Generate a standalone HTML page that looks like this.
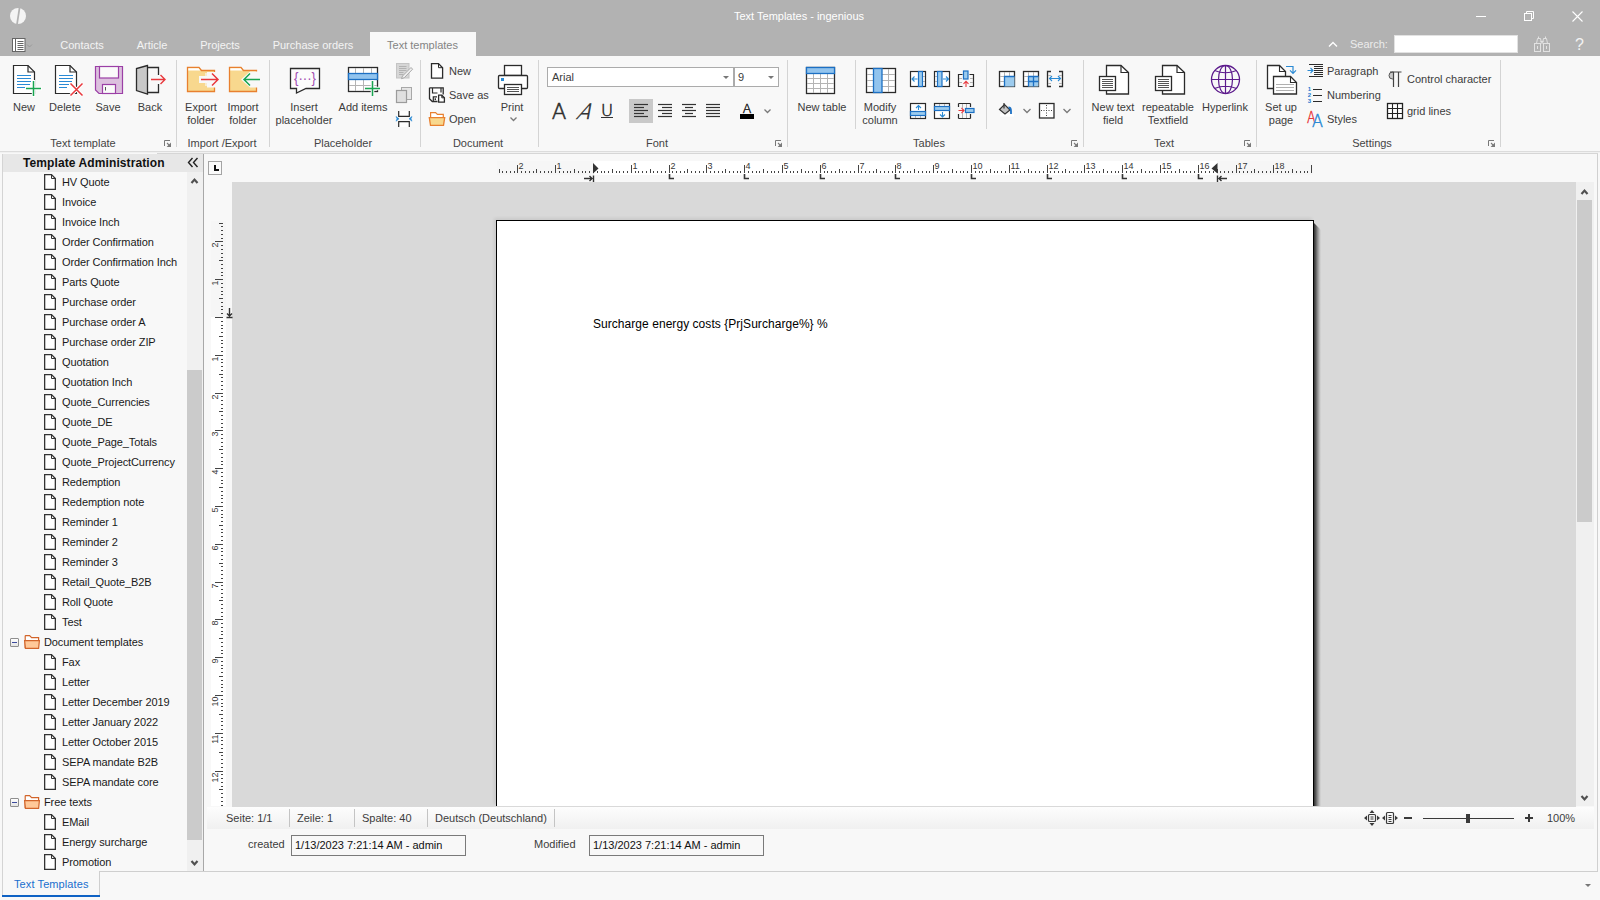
<!DOCTYPE html><html><head><meta charset="utf-8"><title>Text Templates - ingenious</title><style>
*{box-sizing:border-box;margin:0;padding:0}
html,body{width:1600px;height:900px;overflow:hidden;background:#f8f8f8}
body{font-family:"Liberation Sans",sans-serif;font-size:11px;color:#3c3c3c;position:relative;line-height:13px}
.a{position:absolute}
.t{position:absolute;white-space:nowrap;line-height:13px;height:13px}
.c{text-align:center;transform:translateX(-50%)}
.sep{position:absolute;width:1px;background:#d2d2d2}
svg{position:absolute;overflow:visible}
.gl{position:absolute;white-space:nowrap;line-height:13px;height:13px;text-align:center;transform:translateX(-50%);top:137px;color:#444}
</style></head><body><div class="a" style="left:0px;top:0px;width:1600px;height:56px;background:#b2b2b2;"></div><div class="t c" style="left:799px;top:10px;color:#fff;font-size:11px">Text Templates - ingenious</div><div class="a" style="left:370px;top:32px;width:106px;height:24px;background:#f8f8f8;"></div><div class="t c" style="left:82px;top:39px;color:#f4f4f4">Contacts</div><div class="t c" style="left:152px;top:39px;color:#f4f4f4">Article</div><div class="t c" style="left:220px;top:39px;color:#f4f4f4">Projects</div><div class="t c" style="left:313px;top:39px;color:#f4f4f4">Purchase orders</div><div class="t c" style="left:422.5px;top:39px;color:#848484">Text templates</div><div class="t " style="left:1350px;top:38px;color:#ececec">Search:</div><div class="a" style="left:1394px;top:35px;width:124px;height:18px;background:#fff;border:1px solid #e2e2e2"></div><div class="a" style="left:0px;top:56px;width:1600px;height:96px;background:#f8f8f8;"></div><div class="a" style="left:0px;top:151px;width:1600px;height:1px;background:#dcdcdc;"></div><div class="a" style="left:0px;top:152px;width:1600px;height:1px;background:#f1f1f1;"></div><div class="a" style="left:176px;top:60px;width:1px;height:87px;background:#d4d4d4;"></div><div class="a" style="left:269px;top:60px;width:1px;height:87px;background:#d4d4d4;"></div><div class="a" style="left:420px;top:60px;width:1px;height:87px;background:#d4d4d4;"></div><div class="a" style="left:538px;top:60px;width:1px;height:87px;background:#d4d4d4;"></div><div class="a" style="left:787px;top:60px;width:1px;height:87px;background:#d4d4d4;"></div><div class="a" style="left:1083px;top:60px;width:1px;height:87px;background:#d4d4d4;"></div><div class="a" style="left:1256px;top:60px;width:1px;height:87px;background:#d4d4d4;"></div><div class="a" style="left:1500px;top:60px;width:1px;height:87px;background:#d4d4d4;"></div><div class="a" style="left:855px;top:60px;width:1px;height:69px;background:#d4d4d4;"></div><div class="a" style="left:986px;top:60px;width:1px;height:69px;background:#d4d4d4;"></div><div class="gl" style="left:83px">Text template</div><div class="gl" style="left:222px">Import /Export</div><div class="gl" style="left:343px">Placeholder</div><div class="gl" style="left:478px">Document</div><div class="gl" style="left:657px">Font</div><div class="gl" style="left:929px">Tables</div><div class="gl" style="left:1164px">Text</div><div class="gl" style="left:1372px">Settings</div><div class="t c" style="left:24px;top:101px;">New</div><div class="t c" style="left:65px;top:101px;">Delete</div><div class="t c" style="left:108px;top:101px;">Save</div><div class="t c" style="left:150px;top:101px;">Back</div><div class="t c" style="left:201px;top:101px;">Export</div><div class="t c" style="left:201px;top:114px;">folder</div><div class="t c" style="left:243px;top:101px;">Import</div><div class="t c" style="left:243px;top:114px;">folder</div><div class="t c" style="left:304px;top:101px;">Insert</div><div class="t c" style="left:304px;top:114px;">placeholder</div><div class="t c" style="left:363px;top:101px;">Add items</div><div class="t c" style="left:512px;top:101px;">Print</div><div class="t c" style="left:822px;top:101px;">New table</div><div class="t c" style="left:880px;top:101px;">Modify</div><div class="t c" style="left:880px;top:114px;">column</div><div class="t c" style="left:1113px;top:101px;">New text</div><div class="t c" style="left:1113px;top:114px;">field</div><div class="t c" style="left:1168px;top:101px;">repeatable</div><div class="t c" style="left:1168px;top:114px;">Textfield</div><div class="t c" style="left:1225px;top:101px;">Hyperlink</div><div class="t c" style="left:1281px;top:101px;">Set up</div><div class="t c" style="left:1281px;top:114px;">page</div><div class="t " style="left:449px;top:65px;">New</div><div class="t " style="left:449px;top:89px;">Save as</div><div class="t " style="left:449px;top:113px;">Open</div><div class="t " style="left:1327px;top:65px;">Paragraph</div><div class="t " style="left:1327px;top:89px;">Numbering</div><div class="t " style="left:1327px;top:113px;">Styles</div><div class="t " style="left:1407px;top:73px;">Control character</div><div class="t " style="left:1407px;top:105px;">grid lines</div><div class="a" style="left:547px;top:67px;width:187px;height:20px;background:#fff;border:1px solid #ababab"></div><div class="a" style="left:734px;top:67px;width:45px;height:20px;background:#fff;border:1px solid #ababab"></div><div class="t " style="left:552px;top:71px;">Arial</div><div class="t " style="left:738px;top:71px;">9</div><div class="a" style="left:629px;top:99px;width:24px;height:24px;background:#c9c9c9;"></div><div class="a" style="left:2px;top:154px;width:1px;height:718px;background:#d4d4d4;"></div><div class="a" style="left:3px;top:154px;width:200px;height:18px;background:#e7e7e7;"></div><div class="a" style="left:203px;top:154px;width:1px;height:718px;background:#a8a8a8;"></div><div class="t " style="left:23px;top:157px;font-weight:bold;color:#111;font-size:12px;letter-spacing:0.1px">Template Administration</div><svg style="left:44px;top:174px" width="12" height="16" viewBox="0 0 12 16"><path d="M.65 .65H7.5L11.35 4.5V15.35H.65Z" fill="#fff" stroke="#333" stroke-width="1.3"/><path d="M7.5 .65V4.5H11.35" fill="none" stroke="#333" stroke-width="1"/></svg><div class="t " style="left:62px;top:176px;color:#1a1a1a;letter-spacing:-0.1px">HV Quote</div><svg style="left:44px;top:194px" width="12" height="16" viewBox="0 0 12 16"><path d="M.65 .65H7.5L11.35 4.5V15.35H.65Z" fill="#fff" stroke="#333" stroke-width="1.3"/><path d="M7.5 .65V4.5H11.35" fill="none" stroke="#333" stroke-width="1"/></svg><div class="t " style="left:62px;top:196px;color:#1a1a1a;letter-spacing:-0.1px">Invoice</div><svg style="left:44px;top:214px" width="12" height="16" viewBox="0 0 12 16"><path d="M.65 .65H7.5L11.35 4.5V15.35H.65Z" fill="#fff" stroke="#333" stroke-width="1.3"/><path d="M7.5 .65V4.5H11.35" fill="none" stroke="#333" stroke-width="1"/></svg><div class="t " style="left:62px;top:216px;color:#1a1a1a;letter-spacing:-0.1px">Invoice Inch</div><svg style="left:44px;top:234px" width="12" height="16" viewBox="0 0 12 16"><path d="M.65 .65H7.5L11.35 4.5V15.35H.65Z" fill="#fff" stroke="#333" stroke-width="1.3"/><path d="M7.5 .65V4.5H11.35" fill="none" stroke="#333" stroke-width="1"/></svg><div class="t " style="left:62px;top:236px;color:#1a1a1a;letter-spacing:-0.1px">Order Confirmation</div><svg style="left:44px;top:254px" width="12" height="16" viewBox="0 0 12 16"><path d="M.65 .65H7.5L11.35 4.5V15.35H.65Z" fill="#fff" stroke="#333" stroke-width="1.3"/><path d="M7.5 .65V4.5H11.35" fill="none" stroke="#333" stroke-width="1"/></svg><div class="t " style="left:62px;top:256px;color:#1a1a1a;letter-spacing:-0.1px">Order Confirmation Inch</div><svg style="left:44px;top:274px" width="12" height="16" viewBox="0 0 12 16"><path d="M.65 .65H7.5L11.35 4.5V15.35H.65Z" fill="#fff" stroke="#333" stroke-width="1.3"/><path d="M7.5 .65V4.5H11.35" fill="none" stroke="#333" stroke-width="1"/></svg><div class="t " style="left:62px;top:276px;color:#1a1a1a;letter-spacing:-0.1px">Parts Quote</div><svg style="left:44px;top:294px" width="12" height="16" viewBox="0 0 12 16"><path d="M.65 .65H7.5L11.35 4.5V15.35H.65Z" fill="#fff" stroke="#333" stroke-width="1.3"/><path d="M7.5 .65V4.5H11.35" fill="none" stroke="#333" stroke-width="1"/></svg><div class="t " style="left:62px;top:296px;color:#1a1a1a;letter-spacing:-0.1px">Purchase order</div><svg style="left:44px;top:314px" width="12" height="16" viewBox="0 0 12 16"><path d="M.65 .65H7.5L11.35 4.5V15.35H.65Z" fill="#fff" stroke="#333" stroke-width="1.3"/><path d="M7.5 .65V4.5H11.35" fill="none" stroke="#333" stroke-width="1"/></svg><div class="t " style="left:62px;top:316px;color:#1a1a1a;letter-spacing:-0.1px">Purchase order A</div><svg style="left:44px;top:334px" width="12" height="16" viewBox="0 0 12 16"><path d="M.65 .65H7.5L11.35 4.5V15.35H.65Z" fill="#fff" stroke="#333" stroke-width="1.3"/><path d="M7.5 .65V4.5H11.35" fill="none" stroke="#333" stroke-width="1"/></svg><div class="t " style="left:62px;top:336px;color:#1a1a1a;letter-spacing:-0.1px">Purchase order ZIP</div><svg style="left:44px;top:354px" width="12" height="16" viewBox="0 0 12 16"><path d="M.65 .65H7.5L11.35 4.5V15.35H.65Z" fill="#fff" stroke="#333" stroke-width="1.3"/><path d="M7.5 .65V4.5H11.35" fill="none" stroke="#333" stroke-width="1"/></svg><div class="t " style="left:62px;top:356px;color:#1a1a1a;letter-spacing:-0.1px">Quotation</div><svg style="left:44px;top:374px" width="12" height="16" viewBox="0 0 12 16"><path d="M.65 .65H7.5L11.35 4.5V15.35H.65Z" fill="#fff" stroke="#333" stroke-width="1.3"/><path d="M7.5 .65V4.5H11.35" fill="none" stroke="#333" stroke-width="1"/></svg><div class="t " style="left:62px;top:376px;color:#1a1a1a;letter-spacing:-0.1px">Quotation Inch</div><svg style="left:44px;top:394px" width="12" height="16" viewBox="0 0 12 16"><path d="M.65 .65H7.5L11.35 4.5V15.35H.65Z" fill="#fff" stroke="#333" stroke-width="1.3"/><path d="M7.5 .65V4.5H11.35" fill="none" stroke="#333" stroke-width="1"/></svg><div class="t " style="left:62px;top:396px;color:#1a1a1a;letter-spacing:-0.1px">Quote_Currencies</div><svg style="left:44px;top:414px" width="12" height="16" viewBox="0 0 12 16"><path d="M.65 .65H7.5L11.35 4.5V15.35H.65Z" fill="#fff" stroke="#333" stroke-width="1.3"/><path d="M7.5 .65V4.5H11.35" fill="none" stroke="#333" stroke-width="1"/></svg><div class="t " style="left:62px;top:416px;color:#1a1a1a;letter-spacing:-0.1px">Quote_DE</div><svg style="left:44px;top:434px" width="12" height="16" viewBox="0 0 12 16"><path d="M.65 .65H7.5L11.35 4.5V15.35H.65Z" fill="#fff" stroke="#333" stroke-width="1.3"/><path d="M7.5 .65V4.5H11.35" fill="none" stroke="#333" stroke-width="1"/></svg><div class="t " style="left:62px;top:436px;color:#1a1a1a;letter-spacing:-0.1px">Quote_Page_Totals</div><svg style="left:44px;top:454px" width="12" height="16" viewBox="0 0 12 16"><path d="M.65 .65H7.5L11.35 4.5V15.35H.65Z" fill="#fff" stroke="#333" stroke-width="1.3"/><path d="M7.5 .65V4.5H11.35" fill="none" stroke="#333" stroke-width="1"/></svg><div class="t " style="left:62px;top:456px;color:#1a1a1a;letter-spacing:-0.1px">Quote_ProjectCurrency</div><svg style="left:44px;top:474px" width="12" height="16" viewBox="0 0 12 16"><path d="M.65 .65H7.5L11.35 4.5V15.35H.65Z" fill="#fff" stroke="#333" stroke-width="1.3"/><path d="M7.5 .65V4.5H11.35" fill="none" stroke="#333" stroke-width="1"/></svg><div class="t " style="left:62px;top:476px;color:#1a1a1a;letter-spacing:-0.1px">Redemption</div><svg style="left:44px;top:494px" width="12" height="16" viewBox="0 0 12 16"><path d="M.65 .65H7.5L11.35 4.5V15.35H.65Z" fill="#fff" stroke="#333" stroke-width="1.3"/><path d="M7.5 .65V4.5H11.35" fill="none" stroke="#333" stroke-width="1"/></svg><div class="t " style="left:62px;top:496px;color:#1a1a1a;letter-spacing:-0.1px">Redemption note</div><svg style="left:44px;top:514px" width="12" height="16" viewBox="0 0 12 16"><path d="M.65 .65H7.5L11.35 4.5V15.35H.65Z" fill="#fff" stroke="#333" stroke-width="1.3"/><path d="M7.5 .65V4.5H11.35" fill="none" stroke="#333" stroke-width="1"/></svg><div class="t " style="left:62px;top:516px;color:#1a1a1a;letter-spacing:-0.1px">Reminder 1</div><svg style="left:44px;top:534px" width="12" height="16" viewBox="0 0 12 16"><path d="M.65 .65H7.5L11.35 4.5V15.35H.65Z" fill="#fff" stroke="#333" stroke-width="1.3"/><path d="M7.5 .65V4.5H11.35" fill="none" stroke="#333" stroke-width="1"/></svg><div class="t " style="left:62px;top:536px;color:#1a1a1a;letter-spacing:-0.1px">Reminder 2</div><svg style="left:44px;top:554px" width="12" height="16" viewBox="0 0 12 16"><path d="M.65 .65H7.5L11.35 4.5V15.35H.65Z" fill="#fff" stroke="#333" stroke-width="1.3"/><path d="M7.5 .65V4.5H11.35" fill="none" stroke="#333" stroke-width="1"/></svg><div class="t " style="left:62px;top:556px;color:#1a1a1a;letter-spacing:-0.1px">Reminder 3</div><svg style="left:44px;top:574px" width="12" height="16" viewBox="0 0 12 16"><path d="M.65 .65H7.5L11.35 4.5V15.35H.65Z" fill="#fff" stroke="#333" stroke-width="1.3"/><path d="M7.5 .65V4.5H11.35" fill="none" stroke="#333" stroke-width="1"/></svg><div class="t " style="left:62px;top:576px;color:#1a1a1a;letter-spacing:-0.1px">Retail_Quote_B2B</div><svg style="left:44px;top:594px" width="12" height="16" viewBox="0 0 12 16"><path d="M.65 .65H7.5L11.35 4.5V15.35H.65Z" fill="#fff" stroke="#333" stroke-width="1.3"/><path d="M7.5 .65V4.5H11.35" fill="none" stroke="#333" stroke-width="1"/></svg><div class="t " style="left:62px;top:596px;color:#1a1a1a;letter-spacing:-0.1px">Roll Quote</div><svg style="left:44px;top:614px" width="12" height="16" viewBox="0 0 12 16"><path d="M.65 .65H7.5L11.35 4.5V15.35H.65Z" fill="#fff" stroke="#333" stroke-width="1.3"/><path d="M7.5 .65V4.5H11.35" fill="none" stroke="#333" stroke-width="1"/></svg><div class="t " style="left:62px;top:616px;color:#1a1a1a;letter-spacing:-0.1px">Test</div><div class="a" style="left:10px;top:638px;width:9px;height:9px;border:1px solid #8f8f8f;border-radius:1px;background:linear-gradient(#fff,#e4e4e4)"></div><div class="a" style="left:12px;top:642px;width:5px;height:1px;background:#3c4a9c;"></div><svg style="left:24px;top:635px" width="16" height="14" viewBox="0 0 16 14"><path d="M1.2 13V1.2Q1.2 .6 1.8 .6H5.6L7.6 2.6H14.6V6H1.2" fill="#fff" stroke="#d2652b" stroke-width="1.2"/><path d="M.6 5.6H15.4L14.6 13.4H1.4Z" fill="#ffc898" stroke="#d2652b" stroke-width="1.2"/></svg><div class="t " style="left:44px;top:636px;color:#1a1a1a;letter-spacing:-0.1px">Document templates</div><svg style="left:44px;top:654px" width="12" height="16" viewBox="0 0 12 16"><path d="M.65 .65H7.5L11.35 4.5V15.35H.65Z" fill="#fff" stroke="#333" stroke-width="1.3"/><path d="M7.5 .65V4.5H11.35" fill="none" stroke="#333" stroke-width="1"/></svg><div class="t " style="left:62px;top:656px;color:#1a1a1a;letter-spacing:-0.1px">Fax</div><svg style="left:44px;top:674px" width="12" height="16" viewBox="0 0 12 16"><path d="M.65 .65H7.5L11.35 4.5V15.35H.65Z" fill="#fff" stroke="#333" stroke-width="1.3"/><path d="M7.5 .65V4.5H11.35" fill="none" stroke="#333" stroke-width="1"/></svg><div class="t " style="left:62px;top:676px;color:#1a1a1a;letter-spacing:-0.1px">Letter</div><svg style="left:44px;top:694px" width="12" height="16" viewBox="0 0 12 16"><path d="M.65 .65H7.5L11.35 4.5V15.35H.65Z" fill="#fff" stroke="#333" stroke-width="1.3"/><path d="M7.5 .65V4.5H11.35" fill="none" stroke="#333" stroke-width="1"/></svg><div class="t " style="left:62px;top:696px;color:#1a1a1a;letter-spacing:-0.1px">Letter December 2019</div><svg style="left:44px;top:714px" width="12" height="16" viewBox="0 0 12 16"><path d="M.65 .65H7.5L11.35 4.5V15.35H.65Z" fill="#fff" stroke="#333" stroke-width="1.3"/><path d="M7.5 .65V4.5H11.35" fill="none" stroke="#333" stroke-width="1"/></svg><div class="t " style="left:62px;top:716px;color:#1a1a1a;letter-spacing:-0.1px">Letter January 2022</div><svg style="left:44px;top:734px" width="12" height="16" viewBox="0 0 12 16"><path d="M.65 .65H7.5L11.35 4.5V15.35H.65Z" fill="#fff" stroke="#333" stroke-width="1.3"/><path d="M7.5 .65V4.5H11.35" fill="none" stroke="#333" stroke-width="1"/></svg><div class="t " style="left:62px;top:736px;color:#1a1a1a;letter-spacing:-0.1px">Letter October 2015</div><svg style="left:44px;top:754px" width="12" height="16" viewBox="0 0 12 16"><path d="M.65 .65H7.5L11.35 4.5V15.35H.65Z" fill="#fff" stroke="#333" stroke-width="1.3"/><path d="M7.5 .65V4.5H11.35" fill="none" stroke="#333" stroke-width="1"/></svg><div class="t " style="left:62px;top:756px;color:#1a1a1a;letter-spacing:-0.1px">SEPA mandate B2B</div><svg style="left:44px;top:774px" width="12" height="16" viewBox="0 0 12 16"><path d="M.65 .65H7.5L11.35 4.5V15.35H.65Z" fill="#fff" stroke="#333" stroke-width="1.3"/><path d="M7.5 .65V4.5H11.35" fill="none" stroke="#333" stroke-width="1"/></svg><div class="t " style="left:62px;top:776px;color:#1a1a1a;letter-spacing:-0.1px">SEPA mandate core</div><div class="a" style="left:10px;top:798px;width:9px;height:9px;border:1px solid #8f8f8f;border-radius:1px;background:linear-gradient(#fff,#e4e4e4)"></div><div class="a" style="left:12px;top:802px;width:5px;height:1px;background:#3c4a9c;"></div><svg style="left:24px;top:795px" width="16" height="14" viewBox="0 0 16 14"><path d="M1.2 13V1.2Q1.2 .6 1.8 .6H5.6L7.6 2.6H14.6V6H1.2" fill="#fff" stroke="#d2652b" stroke-width="1.2"/><path d="M.6 5.6H15.4L14.6 13.4H1.4Z" fill="#ffc898" stroke="#d2652b" stroke-width="1.2"/></svg><div class="t " style="left:44px;top:796px;color:#1a1a1a;letter-spacing:-0.1px">Free texts</div><svg style="left:44px;top:814px" width="12" height="16" viewBox="0 0 12 16"><path d="M.65 .65H7.5L11.35 4.5V15.35H.65Z" fill="#fff" stroke="#333" stroke-width="1.3"/><path d="M7.5 .65V4.5H11.35" fill="none" stroke="#333" stroke-width="1"/></svg><div class="t " style="left:62px;top:816px;color:#1a1a1a;letter-spacing:-0.1px">EMail</div><svg style="left:44px;top:834px" width="12" height="16" viewBox="0 0 12 16"><path d="M.65 .65H7.5L11.35 4.5V15.35H.65Z" fill="#fff" stroke="#333" stroke-width="1.3"/><path d="M7.5 .65V4.5H11.35" fill="none" stroke="#333" stroke-width="1"/></svg><div class="t " style="left:62px;top:836px;color:#1a1a1a;letter-spacing:-0.1px">Energy surcharge</div><svg style="left:44px;top:854px" width="12" height="16" viewBox="0 0 12 16"><path d="M.65 .65H7.5L11.35 4.5V15.35H.65Z" fill="#fff" stroke="#333" stroke-width="1.3"/><path d="M7.5 .65V4.5H11.35" fill="none" stroke="#333" stroke-width="1"/></svg><div class="t " style="left:62px;top:856px;color:#1a1a1a;letter-spacing:-0.1px">Promotion</div><div class="a" style="left:187px;top:172px;width:16px;height:700px;background:#f0f0f0;"></div><div class="a" style="left:187px;top:370px;width:15px;height:470px;background:#cbcbcb;"></div><svg style="left:0;top:0" width="1600" height="900"><path d="M191.5 183.0L194.5 179.6L197.5 183.0" fill="none" stroke="#505050" stroke-width="2.2"/></svg><svg style="left:0;top:0" width="1600" height="900"><path d="M191.5 861.0L194.5 864.4L197.5 861.0" fill="none" stroke="#505050" stroke-width="2.2"/></svg><svg style="left:187px;top:157px" width="12" height="11"><path d="M5.5 1L1.5 5.5L5.5 10M10.5 1L6.5 5.5L10.5 10" fill="none" stroke="#222" stroke-width="1.4"/></svg><div class="a" style="left:232px;top:182px;width:1344px;height:624px;background:#d9d9d9;"></div><div class="a" style="left:496px;top:220px;width:818px;height:586px;background:#fff;border:1px solid #000;border-bottom:none;box-shadow:-2px -2px 3px rgba(0,0,0,.07)"></div><div class="a" style="left:1314px;top:223px;width:7px;height:583px;background:linear-gradient(90deg,#333 0,#5a5a5a 25%,#8c8c8c 50%,#bdbdbd 78%,#d9d9d9);clip-path:polygon(0 0,100% 7px,100% 100%,0 100%)"></div><div class="t " style="left:593px;top:317px;font-size:12px;color:#000;line-height:14px;height:14px;letter-spacing:0.05px">Surcharge energy costs {PrjSurcharge%} %</div><div class="a" style="left:232px;top:806px;width:1344px;height:1px;background:#d9d9d9;"></div><div class="a" style="left:208px;top:161px;width:14px;height:14px;border:1px solid #a4a4a4;background:#fafafa"></div><div class="a" style="left:214px;top:165px;width:2px;height:6px;background:#111;"></div><div class="a" style="left:214px;top:169px;width:5px;height:2px;background:#111;"></div><div class="a" style="left:211px;top:221px;width:15px;height:96px;background:#f6f6f6;"></div><div class="a" style="left:211px;top:317px;width:15px;height:489px;background:#fff;"></div><div class="a" style="left:497px;top:161px;width:816px;height:14px;background:#f6f6f6"></div>
<div class="a" style="left:594px;top:161px;width:623px;height:14px;background:#fff"></div>
<svg style="left:0;top:0" width="1600" height="900" viewBox="0 0 1600 900" shape-rendering="crispEdges">
<rect x="499" y="169" width="1" height="4" fill="#444"/>
<rect x="502" y="171" width="1" height="2" fill="#444"/>
<rect x="506" y="171" width="1" height="2" fill="#444"/>
<rect x="510" y="171" width="1" height="2" fill="#444"/>
<rect x="514" y="171" width="1" height="2" fill="#444"/>
<rect x="517" y="165" width="1" height="8" fill="#444"/>
<rect x="521" y="171" width="1" height="2" fill="#444"/>
<rect x="525" y="171" width="1" height="2" fill="#444"/>
<rect x="529" y="171" width="1" height="2" fill="#444"/>
<rect x="533" y="171" width="1" height="2" fill="#444"/>
<rect x="536" y="169" width="1" height="4" fill="#444"/>
<rect x="540" y="171" width="1" height="2" fill="#444"/>
<rect x="544" y="171" width="1" height="2" fill="#444"/>
<rect x="548" y="171" width="1" height="2" fill="#444"/>
<rect x="551" y="171" width="1" height="2" fill="#444"/>
<rect x="555" y="165" width="1" height="8" fill="#444"/>
<rect x="559" y="171" width="1" height="2" fill="#444"/>
<rect x="563" y="171" width="1" height="2" fill="#444"/>
<rect x="567" y="171" width="1" height="2" fill="#444"/>
<rect x="570" y="171" width="1" height="2" fill="#444"/>
<rect x="574" y="169" width="1" height="4" fill="#444"/>
<rect x="578" y="171" width="1" height="2" fill="#444"/>
<rect x="582" y="171" width="1" height="2" fill="#444"/>
<rect x="585" y="171" width="1" height="2" fill="#444"/>
<rect x="589" y="171" width="1" height="2" fill="#444"/>
<rect x="593" y="165" width="1" height="8" fill="#444"/>
<rect x="597" y="171" width="1" height="2" fill="#444"/>
<rect x="601" y="171" width="1" height="2" fill="#444"/>
<rect x="604" y="171" width="1" height="2" fill="#444"/>
<rect x="608" y="171" width="1" height="2" fill="#444"/>
<rect x="612" y="169" width="1" height="4" fill="#444"/>
<rect x="616" y="171" width="1" height="2" fill="#444"/>
<rect x="619" y="171" width="1" height="2" fill="#444"/>
<rect x="623" y="171" width="1" height="2" fill="#444"/>
<rect x="627" y="171" width="1" height="2" fill="#444"/>
<rect x="631" y="165" width="1" height="8" fill="#444"/>
<rect x="635" y="171" width="1" height="2" fill="#444"/>
<rect x="638" y="171" width="1" height="2" fill="#444"/>
<rect x="642" y="171" width="1" height="2" fill="#444"/>
<rect x="646" y="171" width="1" height="2" fill="#444"/>
<rect x="650" y="169" width="1" height="4" fill="#444"/>
<rect x="653" y="171" width="1" height="2" fill="#444"/>
<rect x="657" y="171" width="1" height="2" fill="#444"/>
<rect x="661" y="171" width="1" height="2" fill="#444"/>
<rect x="665" y="171" width="1" height="2" fill="#444"/>
<rect x="669" y="165" width="1" height="8" fill="#444"/>
<rect x="672" y="171" width="1" height="2" fill="#444"/>
<rect x="676" y="171" width="1" height="2" fill="#444"/>
<rect x="680" y="171" width="1" height="2" fill="#444"/>
<rect x="684" y="171" width="1" height="2" fill="#444"/>
<rect x="687" y="169" width="1" height="4" fill="#444"/>
<rect x="691" y="171" width="1" height="2" fill="#444"/>
<rect x="695" y="171" width="1" height="2" fill="#444"/>
<rect x="699" y="171" width="1" height="2" fill="#444"/>
<rect x="703" y="171" width="1" height="2" fill="#444"/>
<rect x="706" y="165" width="1" height="8" fill="#444"/>
<rect x="710" y="171" width="1" height="2" fill="#444"/>
<rect x="714" y="171" width="1" height="2" fill="#444"/>
<rect x="718" y="171" width="1" height="2" fill="#444"/>
<rect x="722" y="171" width="1" height="2" fill="#444"/>
<rect x="725" y="169" width="1" height="4" fill="#444"/>
<rect x="729" y="171" width="1" height="2" fill="#444"/>
<rect x="733" y="171" width="1" height="2" fill="#444"/>
<rect x="737" y="171" width="1" height="2" fill="#444"/>
<rect x="740" y="171" width="1" height="2" fill="#444"/>
<rect x="744" y="165" width="1" height="8" fill="#444"/>
<rect x="748" y="171" width="1" height="2" fill="#444"/>
<rect x="752" y="171" width="1" height="2" fill="#444"/>
<rect x="756" y="171" width="1" height="2" fill="#444"/>
<rect x="759" y="171" width="1" height="2" fill="#444"/>
<rect x="763" y="169" width="1" height="4" fill="#444"/>
<rect x="767" y="171" width="1" height="2" fill="#444"/>
<rect x="771" y="171" width="1" height="2" fill="#444"/>
<rect x="774" y="171" width="1" height="2" fill="#444"/>
<rect x="778" y="171" width="1" height="2" fill="#444"/>
<rect x="782" y="165" width="1" height="8" fill="#444"/>
<rect x="786" y="171" width="1" height="2" fill="#444"/>
<rect x="790" y="171" width="1" height="2" fill="#444"/>
<rect x="793" y="171" width="1" height="2" fill="#444"/>
<rect x="797" y="171" width="1" height="2" fill="#444"/>
<rect x="801" y="169" width="1" height="4" fill="#444"/>
<rect x="805" y="171" width="1" height="2" fill="#444"/>
<rect x="808" y="171" width="1" height="2" fill="#444"/>
<rect x="812" y="171" width="1" height="2" fill="#444"/>
<rect x="816" y="171" width="1" height="2" fill="#444"/>
<rect x="820" y="165" width="1" height="8" fill="#444"/>
<rect x="824" y="171" width="1" height="2" fill="#444"/>
<rect x="827" y="171" width="1" height="2" fill="#444"/>
<rect x="831" y="171" width="1" height="2" fill="#444"/>
<rect x="835" y="171" width="1" height="2" fill="#444"/>
<rect x="839" y="169" width="1" height="4" fill="#444"/>
<rect x="842" y="171" width="1" height="2" fill="#444"/>
<rect x="846" y="171" width="1" height="2" fill="#444"/>
<rect x="850" y="171" width="1" height="2" fill="#444"/>
<rect x="854" y="171" width="1" height="2" fill="#444"/>
<rect x="858" y="165" width="1" height="8" fill="#444"/>
<rect x="861" y="171" width="1" height="2" fill="#444"/>
<rect x="865" y="171" width="1" height="2" fill="#444"/>
<rect x="869" y="171" width="1" height="2" fill="#444"/>
<rect x="873" y="171" width="1" height="2" fill="#444"/>
<rect x="876" y="169" width="1" height="4" fill="#444"/>
<rect x="880" y="171" width="1" height="2" fill="#444"/>
<rect x="884" y="171" width="1" height="2" fill="#444"/>
<rect x="888" y="171" width="1" height="2" fill="#444"/>
<rect x="892" y="171" width="1" height="2" fill="#444"/>
<rect x="895" y="165" width="1" height="8" fill="#444"/>
<rect x="899" y="171" width="1" height="2" fill="#444"/>
<rect x="903" y="171" width="1" height="2" fill="#444"/>
<rect x="907" y="171" width="1" height="2" fill="#444"/>
<rect x="910" y="171" width="1" height="2" fill="#444"/>
<rect x="914" y="169" width="1" height="4" fill="#444"/>
<rect x="918" y="171" width="1" height="2" fill="#444"/>
<rect x="922" y="171" width="1" height="2" fill="#444"/>
<rect x="926" y="171" width="1" height="2" fill="#444"/>
<rect x="929" y="171" width="1" height="2" fill="#444"/>
<rect x="933" y="165" width="1" height="8" fill="#444"/>
<rect x="937" y="171" width="1" height="2" fill="#444"/>
<rect x="941" y="171" width="1" height="2" fill="#444"/>
<rect x="944" y="171" width="1" height="2" fill="#444"/>
<rect x="948" y="171" width="1" height="2" fill="#444"/>
<rect x="952" y="169" width="1" height="4" fill="#444"/>
<rect x="956" y="171" width="1" height="2" fill="#444"/>
<rect x="960" y="171" width="1" height="2" fill="#444"/>
<rect x="963" y="171" width="1" height="2" fill="#444"/>
<rect x="967" y="171" width="1" height="2" fill="#444"/>
<rect x="971" y="165" width="1" height="8" fill="#444"/>
<rect x="975" y="171" width="1" height="2" fill="#444"/>
<rect x="979" y="171" width="1" height="2" fill="#444"/>
<rect x="982" y="171" width="1" height="2" fill="#444"/>
<rect x="986" y="171" width="1" height="2" fill="#444"/>
<rect x="990" y="169" width="1" height="4" fill="#444"/>
<rect x="994" y="171" width="1" height="2" fill="#444"/>
<rect x="997" y="171" width="1" height="2" fill="#444"/>
<rect x="1001" y="171" width="1" height="2" fill="#444"/>
<rect x="1005" y="171" width="1" height="2" fill="#444"/>
<rect x="1009" y="165" width="1" height="8" fill="#444"/>
<rect x="1013" y="171" width="1" height="2" fill="#444"/>
<rect x="1016" y="171" width="1" height="2" fill="#444"/>
<rect x="1020" y="171" width="1" height="2" fill="#444"/>
<rect x="1024" y="171" width="1" height="2" fill="#444"/>
<rect x="1028" y="169" width="1" height="4" fill="#444"/>
<rect x="1031" y="171" width="1" height="2" fill="#444"/>
<rect x="1035" y="171" width="1" height="2" fill="#444"/>
<rect x="1039" y="171" width="1" height="2" fill="#444"/>
<rect x="1043" y="171" width="1" height="2" fill="#444"/>
<rect x="1047" y="165" width="1" height="8" fill="#444"/>
<rect x="1050" y="171" width="1" height="2" fill="#444"/>
<rect x="1054" y="171" width="1" height="2" fill="#444"/>
<rect x="1058" y="171" width="1" height="2" fill="#444"/>
<rect x="1062" y="171" width="1" height="2" fill="#444"/>
<rect x="1065" y="169" width="1" height="4" fill="#444"/>
<rect x="1069" y="171" width="1" height="2" fill="#444"/>
<rect x="1073" y="171" width="1" height="2" fill="#444"/>
<rect x="1077" y="171" width="1" height="2" fill="#444"/>
<rect x="1081" y="171" width="1" height="2" fill="#444"/>
<rect x="1084" y="165" width="1" height="8" fill="#444"/>
<rect x="1088" y="171" width="1" height="2" fill="#444"/>
<rect x="1092" y="171" width="1" height="2" fill="#444"/>
<rect x="1096" y="171" width="1" height="2" fill="#444"/>
<rect x="1099" y="171" width="1" height="2" fill="#444"/>
<rect x="1103" y="169" width="1" height="4" fill="#444"/>
<rect x="1107" y="171" width="1" height="2" fill="#444"/>
<rect x="1111" y="171" width="1" height="2" fill="#444"/>
<rect x="1115" y="171" width="1" height="2" fill="#444"/>
<rect x="1118" y="171" width="1" height="2" fill="#444"/>
<rect x="1122" y="165" width="1" height="8" fill="#444"/>
<rect x="1126" y="171" width="1" height="2" fill="#444"/>
<rect x="1130" y="171" width="1" height="2" fill="#444"/>
<rect x="1133" y="171" width="1" height="2" fill="#444"/>
<rect x="1137" y="171" width="1" height="2" fill="#444"/>
<rect x="1141" y="169" width="1" height="4" fill="#444"/>
<rect x="1145" y="171" width="1" height="2" fill="#444"/>
<rect x="1149" y="171" width="1" height="2" fill="#444"/>
<rect x="1152" y="171" width="1" height="2" fill="#444"/>
<rect x="1156" y="171" width="1" height="2" fill="#444"/>
<rect x="1160" y="165" width="1" height="8" fill="#444"/>
<rect x="1164" y="171" width="1" height="2" fill="#444"/>
<rect x="1167" y="171" width="1" height="2" fill="#444"/>
<rect x="1171" y="171" width="1" height="2" fill="#444"/>
<rect x="1175" y="171" width="1" height="2" fill="#444"/>
<rect x="1179" y="169" width="1" height="4" fill="#444"/>
<rect x="1183" y="171" width="1" height="2" fill="#444"/>
<rect x="1186" y="171" width="1" height="2" fill="#444"/>
<rect x="1190" y="171" width="1" height="2" fill="#444"/>
<rect x="1194" y="171" width="1" height="2" fill="#444"/>
<rect x="1198" y="165" width="1" height="8" fill="#444"/>
<rect x="1201" y="171" width="1" height="2" fill="#444"/>
<rect x="1205" y="171" width="1" height="2" fill="#444"/>
<rect x="1209" y="171" width="1" height="2" fill="#444"/>
<rect x="1213" y="171" width="1" height="2" fill="#444"/>
<rect x="1217" y="169" width="1" height="4" fill="#444"/>
<rect x="1220" y="171" width="1" height="2" fill="#444"/>
<rect x="1224" y="171" width="1" height="2" fill="#444"/>
<rect x="1228" y="171" width="1" height="2" fill="#444"/>
<rect x="1232" y="171" width="1" height="2" fill="#444"/>
<rect x="1236" y="165" width="1" height="8" fill="#444"/>
<rect x="1239" y="171" width="1" height="2" fill="#444"/>
<rect x="1243" y="171" width="1" height="2" fill="#444"/>
<rect x="1247" y="171" width="1" height="2" fill="#444"/>
<rect x="1251" y="171" width="1" height="2" fill="#444"/>
<rect x="1254" y="169" width="1" height="4" fill="#444"/>
<rect x="1258" y="171" width="1" height="2" fill="#444"/>
<rect x="1262" y="171" width="1" height="2" fill="#444"/>
<rect x="1266" y="171" width="1" height="2" fill="#444"/>
<rect x="1270" y="171" width="1" height="2" fill="#444"/>
<rect x="1273" y="165" width="1" height="8" fill="#444"/>
<rect x="1277" y="171" width="1" height="2" fill="#444"/>
<rect x="1281" y="171" width="1" height="2" fill="#444"/>
<rect x="1285" y="171" width="1" height="2" fill="#444"/>
<rect x="1288" y="171" width="1" height="2" fill="#444"/>
<rect x="1292" y="169" width="1" height="4" fill="#444"/>
<rect x="1296" y="171" width="1" height="2" fill="#444"/>
<rect x="1300" y="171" width="1" height="2" fill="#444"/>
<rect x="1304" y="171" width="1" height="2" fill="#444"/>
<rect x="1307" y="171" width="1" height="2" fill="#444"/>
<rect x="1311" y="165" width="1" height="8" fill="#444"/>
<rect x="219" y="223" width="4" height="1" fill="#444"/>
<rect x="221" y="226" width="2" height="1" fill="#444"/>
<rect x="221" y="230" width="2" height="1" fill="#444"/>
<rect x="221" y="234" width="2" height="1" fill="#444"/>
<rect x="221" y="238" width="2" height="1" fill="#444"/>
<rect x="215" y="241" width="8" height="1" fill="#444"/>
<rect x="221" y="245" width="2" height="1" fill="#444"/>
<rect x="221" y="249" width="2" height="1" fill="#444"/>
<rect x="221" y="253" width="2" height="1" fill="#444"/>
<rect x="221" y="257" width="2" height="1" fill="#444"/>
<rect x="219" y="260" width="4" height="1" fill="#444"/>
<rect x="221" y="264" width="2" height="1" fill="#444"/>
<rect x="221" y="268" width="2" height="1" fill="#444"/>
<rect x="221" y="272" width="2" height="1" fill="#444"/>
<rect x="221" y="275" width="2" height="1" fill="#444"/>
<rect x="215" y="279" width="8" height="1" fill="#444"/>
<rect x="221" y="283" width="2" height="1" fill="#444"/>
<rect x="221" y="287" width="2" height="1" fill="#444"/>
<rect x="221" y="291" width="2" height="1" fill="#444"/>
<rect x="221" y="294" width="2" height="1" fill="#444"/>
<rect x="219" y="298" width="4" height="1" fill="#444"/>
<rect x="221" y="302" width="2" height="1" fill="#444"/>
<rect x="221" y="306" width="2" height="1" fill="#444"/>
<rect x="221" y="309" width="2" height="1" fill="#444"/>
<rect x="221" y="313" width="2" height="1" fill="#444"/>
<rect x="215" y="317" width="8" height="1" fill="#444"/>
<rect x="221" y="321" width="2" height="1" fill="#444"/>
<rect x="221" y="325" width="2" height="1" fill="#444"/>
<rect x="221" y="328" width="2" height="1" fill="#444"/>
<rect x="221" y="332" width="2" height="1" fill="#444"/>
<rect x="219" y="336" width="4" height="1" fill="#444"/>
<rect x="221" y="340" width="2" height="1" fill="#444"/>
<rect x="221" y="343" width="2" height="1" fill="#444"/>
<rect x="221" y="347" width="2" height="1" fill="#444"/>
<rect x="221" y="351" width="2" height="1" fill="#444"/>
<rect x="215" y="355" width="8" height="1" fill="#444"/>
<rect x="221" y="359" width="2" height="1" fill="#444"/>
<rect x="221" y="362" width="2" height="1" fill="#444"/>
<rect x="221" y="366" width="2" height="1" fill="#444"/>
<rect x="221" y="370" width="2" height="1" fill="#444"/>
<rect x="219" y="374" width="4" height="1" fill="#444"/>
<rect x="221" y="377" width="2" height="1" fill="#444"/>
<rect x="221" y="381" width="2" height="1" fill="#444"/>
<rect x="221" y="385" width="2" height="1" fill="#444"/>
<rect x="221" y="389" width="2" height="1" fill="#444"/>
<rect x="215" y="393" width="8" height="1" fill="#444"/>
<rect x="221" y="396" width="2" height="1" fill="#444"/>
<rect x="221" y="400" width="2" height="1" fill="#444"/>
<rect x="221" y="404" width="2" height="1" fill="#444"/>
<rect x="221" y="408" width="2" height="1" fill="#444"/>
<rect x="219" y="411" width="4" height="1" fill="#444"/>
<rect x="221" y="415" width="2" height="1" fill="#444"/>
<rect x="221" y="419" width="2" height="1" fill="#444"/>
<rect x="221" y="423" width="2" height="1" fill="#444"/>
<rect x="221" y="427" width="2" height="1" fill="#444"/>
<rect x="215" y="430" width="8" height="1" fill="#444"/>
<rect x="221" y="434" width="2" height="1" fill="#444"/>
<rect x="221" y="438" width="2" height="1" fill="#444"/>
<rect x="221" y="442" width="2" height="1" fill="#444"/>
<rect x="221" y="446" width="2" height="1" fill="#444"/>
<rect x="219" y="449" width="4" height="1" fill="#444"/>
<rect x="221" y="453" width="2" height="1" fill="#444"/>
<rect x="221" y="457" width="2" height="1" fill="#444"/>
<rect x="221" y="461" width="2" height="1" fill="#444"/>
<rect x="221" y="464" width="2" height="1" fill="#444"/>
<rect x="215" y="468" width="8" height="1" fill="#444"/>
<rect x="221" y="472" width="2" height="1" fill="#444"/>
<rect x="221" y="476" width="2" height="1" fill="#444"/>
<rect x="221" y="480" width="2" height="1" fill="#444"/>
<rect x="221" y="483" width="2" height="1" fill="#444"/>
<rect x="219" y="487" width="4" height="1" fill="#444"/>
<rect x="221" y="491" width="2" height="1" fill="#444"/>
<rect x="221" y="495" width="2" height="1" fill="#444"/>
<rect x="221" y="498" width="2" height="1" fill="#444"/>
<rect x="221" y="502" width="2" height="1" fill="#444"/>
<rect x="215" y="506" width="8" height="1" fill="#444"/>
<rect x="221" y="510" width="2" height="1" fill="#444"/>
<rect x="221" y="514" width="2" height="1" fill="#444"/>
<rect x="221" y="517" width="2" height="1" fill="#444"/>
<rect x="221" y="521" width="2" height="1" fill="#444"/>
<rect x="219" y="525" width="4" height="1" fill="#444"/>
<rect x="221" y="529" width="2" height="1" fill="#444"/>
<rect x="221" y="532" width="2" height="1" fill="#444"/>
<rect x="221" y="536" width="2" height="1" fill="#444"/>
<rect x="221" y="540" width="2" height="1" fill="#444"/>
<rect x="215" y="544" width="8" height="1" fill="#444"/>
<rect x="221" y="548" width="2" height="1" fill="#444"/>
<rect x="221" y="551" width="2" height="1" fill="#444"/>
<rect x="221" y="555" width="2" height="1" fill="#444"/>
<rect x="221" y="559" width="2" height="1" fill="#444"/>
<rect x="219" y="563" width="4" height="1" fill="#444"/>
<rect x="221" y="566" width="2" height="1" fill="#444"/>
<rect x="221" y="570" width="2" height="1" fill="#444"/>
<rect x="221" y="574" width="2" height="1" fill="#444"/>
<rect x="221" y="578" width="2" height="1" fill="#444"/>
<rect x="215" y="582" width="8" height="1" fill="#444"/>
<rect x="221" y="585" width="2" height="1" fill="#444"/>
<rect x="221" y="589" width="2" height="1" fill="#444"/>
<rect x="221" y="593" width="2" height="1" fill="#444"/>
<rect x="221" y="597" width="2" height="1" fill="#444"/>
<rect x="219" y="600" width="4" height="1" fill="#444"/>
<rect x="221" y="604" width="2" height="1" fill="#444"/>
<rect x="221" y="608" width="2" height="1" fill="#444"/>
<rect x="221" y="612" width="2" height="1" fill="#444"/>
<rect x="221" y="616" width="2" height="1" fill="#444"/>
<rect x="215" y="619" width="8" height="1" fill="#444"/>
<rect x="221" y="623" width="2" height="1" fill="#444"/>
<rect x="221" y="627" width="2" height="1" fill="#444"/>
<rect x="221" y="631" width="2" height="1" fill="#444"/>
<rect x="221" y="634" width="2" height="1" fill="#444"/>
<rect x="219" y="638" width="4" height="1" fill="#444"/>
<rect x="221" y="642" width="2" height="1" fill="#444"/>
<rect x="221" y="646" width="2" height="1" fill="#444"/>
<rect x="221" y="650" width="2" height="1" fill="#444"/>
<rect x="221" y="653" width="2" height="1" fill="#444"/>
<rect x="215" y="657" width="8" height="1" fill="#444"/>
<rect x="221" y="661" width="2" height="1" fill="#444"/>
<rect x="221" y="665" width="2" height="1" fill="#444"/>
<rect x="221" y="668" width="2" height="1" fill="#444"/>
<rect x="221" y="672" width="2" height="1" fill="#444"/>
<rect x="219" y="676" width="4" height="1" fill="#444"/>
<rect x="221" y="680" width="2" height="1" fill="#444"/>
<rect x="221" y="684" width="2" height="1" fill="#444"/>
<rect x="221" y="687" width="2" height="1" fill="#444"/>
<rect x="221" y="691" width="2" height="1" fill="#444"/>
<rect x="215" y="695" width="8" height="1" fill="#444"/>
<rect x="221" y="699" width="2" height="1" fill="#444"/>
<rect x="221" y="703" width="2" height="1" fill="#444"/>
<rect x="221" y="706" width="2" height="1" fill="#444"/>
<rect x="221" y="710" width="2" height="1" fill="#444"/>
<rect x="219" y="714" width="4" height="1" fill="#444"/>
<rect x="221" y="718" width="2" height="1" fill="#444"/>
<rect x="221" y="721" width="2" height="1" fill="#444"/>
<rect x="221" y="725" width="2" height="1" fill="#444"/>
<rect x="221" y="729" width="2" height="1" fill="#444"/>
<rect x="215" y="733" width="8" height="1" fill="#444"/>
<rect x="221" y="737" width="2" height="1" fill="#444"/>
<rect x="221" y="740" width="2" height="1" fill="#444"/>
<rect x="221" y="744" width="2" height="1" fill="#444"/>
<rect x="221" y="748" width="2" height="1" fill="#444"/>
<rect x="219" y="752" width="4" height="1" fill="#444"/>
<rect x="221" y="755" width="2" height="1" fill="#444"/>
<rect x="221" y="759" width="2" height="1" fill="#444"/>
<rect x="221" y="763" width="2" height="1" fill="#444"/>
<rect x="221" y="767" width="2" height="1" fill="#444"/>
<rect x="215" y="771" width="8" height="1" fill="#444"/>
<rect x="221" y="774" width="2" height="1" fill="#444"/>
<rect x="221" y="778" width="2" height="1" fill="#444"/>
<rect x="221" y="782" width="2" height="1" fill="#444"/>
<rect x="221" y="786" width="2" height="1" fill="#444"/>
<rect x="219" y="789" width="4" height="1" fill="#444"/>
<rect x="221" y="793" width="2" height="1" fill="#444"/>
<rect x="221" y="797" width="2" height="1" fill="#444"/>
<rect x="221" y="801" width="2" height="1" fill="#444"/>
<rect x="221" y="805" width="2" height="1" fill="#444"/>
</svg>
<svg style="left:0;top:0" width="1600" height="900" viewBox="0 0 1600 900">
<text x="518.5" y="168.6" font-size="9" fill="#383838" font-family="Liberation Sans,sans-serif">2</text>
<text x="556.5" y="168.6" font-size="9" fill="#383838" font-family="Liberation Sans,sans-serif">1</text>
<text x="632.5" y="168.6" font-size="9" fill="#383838" font-family="Liberation Sans,sans-serif">1</text>
<text x="670.5" y="168.6" font-size="9" fill="#383838" font-family="Liberation Sans,sans-serif">2</text>
<text x="707.5" y="168.6" font-size="9" fill="#383838" font-family="Liberation Sans,sans-serif">3</text>
<text x="745.5" y="168.6" font-size="9" fill="#383838" font-family="Liberation Sans,sans-serif">4</text>
<text x="783.5" y="168.6" font-size="9" fill="#383838" font-family="Liberation Sans,sans-serif">5</text>
<text x="821.5" y="168.6" font-size="9" fill="#383838" font-family="Liberation Sans,sans-serif">6</text>
<text x="859.5" y="168.6" font-size="9" fill="#383838" font-family="Liberation Sans,sans-serif">7</text>
<text x="896.5" y="168.6" font-size="9" fill="#383838" font-family="Liberation Sans,sans-serif">8</text>
<text x="934.5" y="168.6" font-size="9" fill="#383838" font-family="Liberation Sans,sans-serif">9</text>
<text x="972.5" y="168.6" font-size="9" fill="#383838" font-family="Liberation Sans,sans-serif">10</text>
<text x="1010.5" y="168.6" font-size="9" fill="#383838" font-family="Liberation Sans,sans-serif">11</text>
<text x="1048.5" y="168.6" font-size="9" fill="#383838" font-family="Liberation Sans,sans-serif">12</text>
<text x="1085.5" y="168.6" font-size="9" fill="#383838" font-family="Liberation Sans,sans-serif">13</text>
<text x="1123.5" y="168.6" font-size="9" fill="#383838" font-family="Liberation Sans,sans-serif">14</text>
<text x="1161.5" y="168.6" font-size="9" fill="#383838" font-family="Liberation Sans,sans-serif">15</text>
<text x="1199.5" y="168.6" font-size="9" fill="#383838" font-family="Liberation Sans,sans-serif">16</text>
<text x="1237.5" y="168.6" font-size="9" fill="#383838" font-family="Liberation Sans,sans-serif">17</text>
<text x="1274.5" y="168.6" font-size="9" fill="#383838" font-family="Liberation Sans,sans-serif">18</text>
<text transform="translate(218.4,242.5) rotate(-90)" text-anchor="end" font-size="9" fill="#383838" font-family="Liberation Sans,sans-serif">2</text>
<text transform="translate(218.4,280.5) rotate(-90)" text-anchor="end" font-size="9" fill="#383838" font-family="Liberation Sans,sans-serif">1</text>
<text transform="translate(218.4,356.5) rotate(-90)" text-anchor="end" font-size="9" fill="#383838" font-family="Liberation Sans,sans-serif">1</text>
<text transform="translate(218.4,394.5) rotate(-90)" text-anchor="end" font-size="9" fill="#383838" font-family="Liberation Sans,sans-serif">2</text>
<text transform="translate(218.4,431.5) rotate(-90)" text-anchor="end" font-size="9" fill="#383838" font-family="Liberation Sans,sans-serif">3</text>
<text transform="translate(218.4,469.5) rotate(-90)" text-anchor="end" font-size="9" fill="#383838" font-family="Liberation Sans,sans-serif">4</text>
<text transform="translate(218.4,507.5) rotate(-90)" text-anchor="end" font-size="9" fill="#383838" font-family="Liberation Sans,sans-serif">5</text>
<text transform="translate(218.4,545.5) rotate(-90)" text-anchor="end" font-size="9" fill="#383838" font-family="Liberation Sans,sans-serif">6</text>
<text transform="translate(218.4,583.5) rotate(-90)" text-anchor="end" font-size="9" fill="#383838" font-family="Liberation Sans,sans-serif">7</text>
<text transform="translate(218.4,620.5) rotate(-90)" text-anchor="end" font-size="9" fill="#383838" font-family="Liberation Sans,sans-serif">8</text>
<text transform="translate(218.4,658.5) rotate(-90)" text-anchor="end" font-size="9" fill="#383838" font-family="Liberation Sans,sans-serif">9</text>
<text transform="translate(218.4,696.5) rotate(-90)" text-anchor="end" font-size="9" fill="#383838" font-family="Liberation Sans,sans-serif">10</text>
<text transform="translate(218.4,734.5) rotate(-90)" text-anchor="end" font-size="9" fill="#383838" font-family="Liberation Sans,sans-serif">11</text>
<text transform="translate(218.4,772.5) rotate(-90)" text-anchor="end" font-size="9" fill="#383838" font-family="Liberation Sans,sans-serif">12</text>
<path d="M593 163L598.5 168.5L593 173.5Z" fill="#333"/>
<path d="M1217.5 163L1211.5 168.5L1217.5 173.5Z" fill="#333"/>
<path d="M584 178.5H592M589.5 176L592 178.5L589.5 181M593.5 175.5V182" stroke="#333" stroke-width="1.4" fill="none"/>
<path d="M1227 178.5H1219M1221.5 176L1219 178.5L1221.5 181M1217.5 175.5V182" stroke="#333" stroke-width="1.4" fill="none"/>
<path d="M669.5 174V178.5H674" stroke="#333" stroke-width="1.6" fill="none"/>
<path d="M744.5 174V178.5H749" stroke="#333" stroke-width="1.6" fill="none"/>
<path d="M820.5 174V178.5H825" stroke="#333" stroke-width="1.6" fill="none"/>
<path d="M895.5 174V178.5H900" stroke="#333" stroke-width="1.6" fill="none"/>
<path d="M971.5 174V178.5H976" stroke="#333" stroke-width="1.6" fill="none"/>
<path d="M1047.5 174V178.5H1052" stroke="#333" stroke-width="1.6" fill="none"/>
<path d="M1122.5 174V178.5H1127" stroke="#333" stroke-width="1.6" fill="none"/>
<path d="M1198.5 174V178.5H1203" stroke="#333" stroke-width="1.6" fill="none"/>
<path d="M229.5 308V316M227 313.5L229.5 316L232 313.5M226.5 317.5H232.5" stroke="#333" stroke-width="1.4" fill="none"/>
</svg><div class="a" style="left:1576px;top:182px;width:18px;height:624px;background:#f0f0f0;"></div><div class="a" style="left:1577px;top:200px;width:15px;height:322px;background:#cbcbcb;"></div><svg style="left:0;top:0" width="1600" height="900"><path d="M1581.5 194.0L1584.5 190.6L1587.5 194.0" fill="none" stroke="#505050" stroke-width="2.2"/></svg><svg style="left:0;top:0" width="1600" height="900"><path d="M1581.5 796.0L1584.5 799.4L1587.5 796.0" fill="none" stroke="#505050" stroke-width="2.2"/></svg><div class="a" style="left:1597px;top:153px;width:1px;height:719px;background:#d0d0d0;"></div><div class="a" style="left:157px;top:153px;width:1441px;height:1px;background:#d6d6d6;"></div><div class="a" style="left:207px;top:807px;width:1387px;height:22px;background:linear-gradient(#fdfdfd,#f0f0f0);"></div><div class="t " style="left:226px;top:812px;">Seite: 1/1</div><div class="t " style="left:297px;top:812px;">Zeile: 1</div><div class="t " style="left:362px;top:812px;">Spalte: 40</div><div class="t " style="left:435px;top:812px;">Deutsch (Deutschland)</div><div class="a" style="left:289px;top:809px;width:1px;height:18px;background:#c4c4c4;"></div><div class="a" style="left:354px;top:809px;width:1px;height:18px;background:#c4c4c4;"></div><div class="a" style="left:427px;top:809px;width:1px;height:18px;background:#c4c4c4;"></div><div class="a" style="left:554px;top:809px;width:1px;height:18px;background:#c4c4c4;"></div><div class="t " style="left:1547px;top:812px;">100%</div><div class="t " style="left:248px;top:838px;">created</div><div class="t " style="left:534px;top:838px;">Modified</div><div class="a" style="left:291px;top:835px;width:175px;height:21px;border:1px solid #7a7a7a;background:#f8f8f8"></div><div class="a" style="left:589px;top:835px;width:175px;height:21px;border:1px solid #7a7a7a;background:#f8f8f8"></div><div class="t " style="left:295px;top:839px;color:#111">1/13/2023 7:21:14 AM - admin</div><div class="t " style="left:593px;top:839px;color:#111">1/13/2023 7:21:14 AM - admin</div><div class="a" style="left:99px;top:871px;width:1499px;height:1px;background:#cfcfcf;"></div><div class="a" style="left:2px;top:895px;width:98px;height:2px;background:#0f62c4;"></div><div class="a" style="left:2px;top:871px;width:1px;height:24px;background:#d4d4d4;"></div><div class="a" style="left:99px;top:871px;width:1px;height:24px;background:#cfcfcf;"></div><div class="t " style="left:14px;top:878px;color:#1a6fce;letter-spacing:0.1px">Text Templates</div><svg style="left:1585px;top:884px" width="6" height="4"><path d="M0 0H6L3 3Z" fill="#777"/></svg><svg style="left:0;top:0" width="1600" height="900" viewBox="0 0 1600 900" fill="none"><circle cx="18" cy="16" r="8" fill="#f4f4f4"/>
<path d="M19.6 7.5L17 24.5" stroke="#b2b2b2" fill="none" stroke-width="1.7" />
<rect x="12.5" y="38.5" width="12.5" height="13" stroke="#666" fill="#fff" stroke-width="1" />
<path d="M15.5 38.5V51.5" stroke="#666" fill="none" stroke-width="1" />
<path d="M17.5 41.5H23.5" stroke="#666" fill="none" stroke-width="1" />
<path d="M17.5 43.5H23.5" stroke="#666" fill="none" stroke-width="1" />
<path d="M17.5 45.5H23.5" stroke="#666" fill="none" stroke-width="1" />
<path d="M17.5 47.5H23.5" stroke="#666" fill="none" stroke-width="1" />
<path d="M17.5 49.5H23.5" stroke="#666" fill="none" stroke-width="1" />
<path d="M27 44.5L29.5 47L32 44.5" stroke="#9a9a9a" fill="none" stroke-width="1" />
<path d="M1476 16.5H1486" stroke="#fff" fill="none" stroke-width="1" />
<rect x="1524.5" y="13.5" width="7" height="7" stroke="#fff" fill="none" stroke-width="1" />
<path d="M1526.5 13.5V11.5H1533.5V18.5H1531.5" stroke="#fff" fill="none" stroke-width="1" />
<path d="M1572.5 11.5L1582.5 21.5M1582.5 11.5L1572.5 21.5" stroke="#fff" fill="none" stroke-width="1.1" />
<path d="M1329 46.5L1333 42.5L1337 46.5" stroke="#fff" fill="none" stroke-width="1.4" />
<path d="M1536.5 43.5L1537.5 38.5H1540.5L1541.5 43.5M1542.5 43.5L1543.5 38.5H1546.5L1547.5 43.5" stroke="#e2e2e2" fill="none" stroke-width="1" />
<rect x="1534.5" y="43.5" width="6" height="8" stroke="#e2e2e2" fill="none" stroke-width="1" />
<rect x="1543.5" y="43.5" width="6" height="8" stroke="#e2e2e2" fill="none" stroke-width="1" />
<path d="M1540.5 41.5H1543.5M1537.5 46V49M1546.5 46V49M1538.5 36.5V38.5M1545.5 36.5V38.5" stroke="#e2e2e2" fill="none" stroke-width="1" />
<text x="1579.5" y="50" font-size="16" fill="#f2f2f2" text-anchor="middle" font-family="Liberation Sans,sans-serif">?</text>
<path d="M13.5 65.5H28L34.5 72V93.5H13.5Z" stroke="#2b2b2b" fill="#fff" stroke-width="1.2" />
<path d="M28 65.5V72H34.5" stroke="#2b2b2b" fill="none" stroke-width="1.2" />
<path d="M17 75.5H31" stroke="#2a8ad4" fill="none" stroke-width="1" />
<path d="M17 78.5H31" stroke="#2a8ad4" fill="none" stroke-width="1" />
<path d="M17 81.5H31" stroke="#2a8ad4" fill="none" stroke-width="1" />
<path d="M17 84.5H30" stroke="#2a8ad4" fill="none" stroke-width="1" />
<path d="M17 87.5H25" stroke="#2a8ad4" fill="none" stroke-width="1" />
<path d="M25 88.5H42M33.5 80V97" stroke="#fff" fill="none" stroke-width="3.4" />
<path d="M26 88.5H41M33.5 81V96" stroke="#18a550" fill="none" stroke-width="1.5" />
<path d="M55.5 65.5H70L76.5 72V93.5H55.5Z" stroke="#2b2b2b" fill="#fff" stroke-width="1.2" />
<path d="M70 65.5V72H76.5" stroke="#2b2b2b" fill="none" stroke-width="1.2" />
<path d="M59 75.5H73" stroke="#2a8ad4" fill="none" stroke-width="1" />
<path d="M59 78.5H73" stroke="#2a8ad4" fill="none" stroke-width="1" />
<path d="M59 81.5H72" stroke="#2a8ad4" fill="none" stroke-width="1" />
<path d="M59 84.5H69" stroke="#2a8ad4" fill="none" stroke-width="1" />
<path d="M59 87.5H67" stroke="#2a8ad4" fill="none" stroke-width="1" />
<path d="M70.5 83.5L82.5 95.5M82.5 83.5L70.5 95.5" stroke="#fff" fill="none" stroke-width="3.4" />
<path d="M70.5 83.5L82.5 95.5M82.5 83.5L70.5 95.5" stroke="#e8383d" fill="none" stroke-width="1.5" />
<path d="M95.5 66.5H122.5V93.5H99L95.5 90Z" stroke="#9b3fa6" fill="#dcc0de" stroke-width="1.2" />
<rect x="99.5" y="66.5" width="19" height="11.5" stroke="#9b3fa6" fill="#fafafa" stroke-width="1.2" />
<rect x="102.5" y="84.5" width="13" height="9" stroke="#9b3fa6" fill="#fafafa" stroke-width="1.2" />
<path d="M105.5 87V90.5" stroke="#555" fill="none" stroke-width="1" />
<path d="M147.5 65.5L136.5 68.5V90.5L147.5 94Z" stroke="#2b2b2b" fill="#c8c8c8" stroke-width="1.3" />
<path d="M147.5 67.5H158.5V75M158.5 84V92.5H147.5" stroke="#2b2b2b" fill="none" stroke-width="1.3" />
<path d="M151 79.5H165M160.5 75L165 79.5L160.5 84" stroke="#e8383d" fill="none" stroke-width="1.4" />
<path d="M187.5 67.5H199L201.5 70.5H214.5V91.5H187.5Z" stroke="#e8802f" fill="#f8d88e" stroke-width="1.3" />
<path d="M188.3 70.4V68.3H198.6L200.3 70.4Z" fill="#fff"/>
<rect x="207" y="72" width="10" height="15.5" fill="#f8f8f8"/>
<rect x="199" y="76" width="9" height="7" fill="#f8f8f8"/>
<rect x="205" y="73" width="3" height="13" fill="#f8f8f8" opacity=".6"/>
<path d="M201 79.5H217.5M212 73.5L218 79.5L212 85.5" stroke="#e8383d" fill="none" stroke-width="1.5" />
<path d="M229.5 67.5H241L243.5 70.5H256.5V91.5H229.5Z" stroke="#e8802f" fill="#f8d88e" stroke-width="1.3" />
<path d="M230.3 70.4V68.3H240.6L242.3 70.4Z" fill="#fff"/>
<path d="M241 79.5L250 71.5H258.5V87.5H250Z" fill="#f8f8f8"/>
<path d="M244 79.5H260M250 73.5L244 79.5L250 85.5" stroke="#18a550" fill="none" stroke-width="1.5" />
<path d="M290.5 68.5H319.5V88.5H306L296.5 93V88.5H290.5Z" stroke="#2b2b2b" fill="#fcfcfc" stroke-width="1.3" />
<text x="305" y="83" font-size="14" fill="#a24cb2" text-anchor="middle" font-family="Liberation Sans,sans-serif" textLength="22" lengthAdjust="spacingAndGlyphs">{···}</text>
<rect x="348.5" y="67.5" width="29" height="24" stroke="#2b2b2b" fill="#fff" stroke-width="1.3" />
<path d="M355.5 68V91" stroke="#b4b4b4" fill="none" stroke-width="1" />
<path d="M363.5 68V91" stroke="#b4b4b4" fill="none" stroke-width="1" />
<path d="M371.5 68V91" stroke="#b4b4b4" fill="none" stroke-width="1" />
<path d="M349 85.5H377" stroke="#b4b4b4" fill="none" stroke-width="1" />
<rect x="348.5" y="73.5" width="29" height="6" stroke="#1c70c4" fill="#92c4ee" stroke-width="1.3" />
<path d="M364 88.5H381M372.5 80V97" stroke="#f8f8f8" fill="none" stroke-width="3.6" />
<path d="M365 88.5H380M372.5 81V96" stroke="#18a550" fill="none" stroke-width="1.5" />
<rect x="396.5" y="63.5" width="12.5" height="14.5" stroke="#c4c4c4" fill="#d6d6d6" stroke-width="1" />
<path d="M399 66.5H406.5" stroke="#b2b2b2" fill="none" stroke-width="1" />
<path d="M399 68.5H406.5" stroke="#b2b2b2" fill="none" stroke-width="1" />
<path d="M399 70.5H406.5" stroke="#b2b2b2" fill="none" stroke-width="1" />
<path d="M399 72.5H403.5" stroke="#b2b2b2" fill="none" stroke-width="1" />
<path d="M399 74.5H403.5" stroke="#b2b2b2" fill="none" stroke-width="1" />
<path d="M411 67.5L402.5 76L401.5 78.7L404.3 77.7L412.6 69.2Z" stroke="#a8a8a8" fill="#f0f0f0" stroke-width="1" />
<rect x="401.5" y="87.5" width="10" height="12" stroke="#a8a8a8" fill="#e6e6e6" stroke-width="1" />
<rect x="396.5" y="90.5" width="10" height="12" stroke="#9c9c9c" fill="#e0e0e0" stroke-width="1.2" />
<rect x="399" y="111" width="10" height="5" fill="#fff"/><rect x="399" y="122" width="10" height="5" fill="#fff"/>
<path d="M398.7 111V116.3H409.3V111M398.7 127V121.6H409.3V127" stroke="#2b2b2b" fill="none" stroke-width="1.2" />
<path d="M396 116.5L399 118.8L396 121.2L397 118.8ZM412 116.5L409 118.8L412 121.2L411 118.8Z" fill="#2a8ad4" stroke="#2a8ad4" stroke-width=".6"/>
<path d="M431.5 63.6H438.5L442.6 67.7V78.2H431.5Z" stroke="#2b2b2b" fill="#fff" stroke-width="1.3" />
<path d="M438.5 63.6V67.7H442.6" stroke="#2b2b2b" fill="none" stroke-width="1" />
<path d="M429.5 87.8H443.2V101.5H432.3L429.5 98.7Z" fill="#fff"/>
<path d="M429.5 87.8H443.2V94.5M437.5 101.5H432.3L429.5 98.7V87.8" stroke="#2b2b2b" fill="none" stroke-width="1.3" />
<path d="M432.5 88V93H437.5M441 88V92.5" stroke="#2b2b2b" fill="none" stroke-width="1.2" />
<path d="M433.3 101.5V96.8H437" stroke="#2b2b2b" fill="none" stroke-width="1.2" />
<rect x="434.6" y="98.3" width="1.4" height="1.8" fill="#2b2b2b"/>
<path d="M438.6 95.2H441.8L444.4 97.8V102.1H438.6Z" stroke="#2b2b2b" fill="#fff" stroke-width="1.3" />
<path d="M441.8 95.2V97.8H444.4" stroke="#2b2b2b" fill="none" stroke-width="1" />
<path d="M430.6 118V112.6H435.6L437.4 114.4H443.3V118" stroke="#e8802f" fill="#fff" stroke-width="1.2" />
<path d="M429.3 117.6H444.7L443.5 125.3H430.5Z" stroke="#e8802f" fill="#f8d88e" stroke-width="1.3" />
<rect x="504.5" y="65.5" width="17" height="10" stroke="#2b2b2b" fill="#fff" stroke-width="1.3" />
<rect x="498.5" y="75.5" width="29" height="13" stroke="#2b2b2b" fill="#fff" stroke-width="1.3" rx="1"/>
<rect x="504.5" y="84.5" width="17" height="10" stroke="#2b2b2b" fill="#fff" stroke-width="1.3" />
<path d="M507 87.5H519" stroke="#555" fill="none" stroke-width="1" />
<path d="M507 89.5H519" stroke="#555" fill="none" stroke-width="1" />
<path d="M507 91.5H519" stroke="#555" fill="none" stroke-width="1" />
<rect x="501" y="78" width="3" height="3" fill="#2a8ad4"/>
<path d="M510.5 117.5L513.5 120.5L516.5 117.5" stroke="#7a7a7a" fill="none" stroke-width="1.3" />
<path d="M723 76H729L726 79Z" fill="#777"/><path d="M768 76H774L771 79Z" fill="#777"/>
<text x="559" y="118.6" font-size="21.4" fill="#2e2e2e" text-anchor="middle" font-family="DejaVu Sans Light,DejaVu Sans,sans-serif" font-weight="200" stroke="#2e2e2e" stroke-width=".55">A</text>
<text transform="translate(582.2,118.6) skewX(-28)" x="0" y="0" font-size="21.4" fill="#2e2e2e" text-anchor="middle" font-family="DejaVu Sans Light,DejaVu Sans,sans-serif" font-weight="200" stroke="#2e2e2e" stroke-width=".55" textLength="13.4" lengthAdjust="spacingAndGlyphs">A</text>
<text x="607" y="116" font-size="16.5" fill="#2e2e2e" text-anchor="middle" font-family="DejaVu Sans Light,DejaVu Sans,sans-serif" font-weight="200" stroke="#2e2e2e" stroke-width=".55">U</text>
<path d="M601 117.5H613" stroke="#333" fill="none" stroke-width="1" />
<path d="M634 104.5H648" stroke="#333" fill="none" stroke-width="1.2" />
<path d="M634 107.5H644" stroke="#333" fill="none" stroke-width="1.2" />
<path d="M634 110.5H648" stroke="#333" fill="none" stroke-width="1.2" />
<path d="M634 113.5H644" stroke="#333" fill="none" stroke-width="1.2" />
<path d="M634 116.5H648" stroke="#333" fill="none" stroke-width="1.2" />
<path d="M658 104.5H672" stroke="#333" fill="none" stroke-width="1.2" />
<path d="M662 107.5H672" stroke="#333" fill="none" stroke-width="1.2" />
<path d="M658 110.5H672" stroke="#333" fill="none" stroke-width="1.2" />
<path d="M662 113.5H672" stroke="#333" fill="none" stroke-width="1.2" />
<path d="M658 116.5H672" stroke="#333" fill="none" stroke-width="1.2" />
<path d="M682 104.5H696" stroke="#333" fill="none" stroke-width="1.2" />
<path d="M685 107.5H693" stroke="#333" fill="none" stroke-width="1.2" />
<path d="M682 110.5H696" stroke="#333" fill="none" stroke-width="1.2" />
<path d="M685 113.5H693" stroke="#333" fill="none" stroke-width="1.2" />
<path d="M682 116.5H696" stroke="#333" fill="none" stroke-width="1.2" />
<path d="M706 104.5H720" stroke="#333" fill="none" stroke-width="1.2" />
<path d="M706 107.5H720" stroke="#333" fill="none" stroke-width="1.2" />
<path d="M706 110.5H720" stroke="#333" fill="none" stroke-width="1.2" />
<path d="M706 113.5H720" stroke="#333" fill="none" stroke-width="1.2" />
<path d="M706 116.5H720" stroke="#333" fill="none" stroke-width="1.2" />
<text x="747" y="112.8" font-size="12.5" fill="#2e2e2e" text-anchor="middle" font-family="DejaVu Sans Light,DejaVu Sans,sans-serif" font-weight="200" stroke="#2e2e2e" stroke-width=".55">A</text>
<rect x="740" y="114" width="14" height="5" fill="#000"/>
<path d="M764.5 109.5L767.5 112.5L770.5 109.5" stroke="#7a7a7a" fill="none" stroke-width="1.3" />
<rect x="806.5" y="67.5" width="28" height="26" stroke="#2b2b2b" fill="#fff" stroke-width="1.3" />
<path d="M813.5 74V93" stroke="#b4b4b4" fill="none" stroke-width="1" />
<path d="M820.5 74V93" stroke="#b4b4b4" fill="none" stroke-width="1" />
<path d="M827.5 74V93" stroke="#b4b4b4" fill="none" stroke-width="1" />
<path d="M807 78.5H834" stroke="#b4b4b4" fill="none" stroke-width="1" />
<path d="M807 83.5H834" stroke="#b4b4b4" fill="none" stroke-width="1" />
<path d="M807 88.5H834" stroke="#b4b4b4" fill="none" stroke-width="1" />
<rect x="806.5" y="67.5" width="28" height="6" stroke="#1c70c4" fill="#92c4ee" stroke-width="1.3" />
<rect x="866.5" y="68.5" width="29" height="24" stroke="#2b2b2b" fill="#fff" stroke-width="1.3" />
<path d="M888.5 69V92" stroke="#b4b4b4" fill="none" stroke-width="1" />
<path d="M867 74.5H895" stroke="#b4b4b4" fill="none" stroke-width="1" />
<path d="M867 80.5H895" stroke="#b4b4b4" fill="none" stroke-width="1" />
<path d="M867 86.5H895" stroke="#b4b4b4" fill="none" stroke-width="1" />
<rect x="873.5" y="68.5" width="8.5" height="24" stroke="#1c70c4" fill="#92c4ee" stroke-width="1.3" />
<rect x="910.5" y="71.5" width="15" height="15" stroke="#2b2b2b" fill="#fff" stroke-width="1.2" />
<path d="M923 76.5H925M923 81.5H925" stroke="#b4b4b4" fill="none" stroke-width="1" />
<rect x="918.5" y="71.5" width="4" height="15" stroke="#1c70c4" fill="#9ccbee" stroke-width="1.2" />
<path d="M912 79H917.5M914.5 76.5L912 79L914.5 81.5" stroke="#2a8ad4" fill="none" stroke-width="1.1" />
<rect x="934.5" y="71.5" width="15" height="15" stroke="#2b2b2b" fill="#fff" stroke-width="1.2" />
<path d="M935 76.5H937M935 81.5H937" stroke="#b4b4b4" fill="none" stroke-width="1" />
<rect x="937.5" y="71.5" width="4.5" height="15" stroke="#1c70c4" fill="#9ccbee" stroke-width="1.2" />
<path d="M943 79H948.5M946 76.5L948.5 79L946 81.5" stroke="#2a8ad4" fill="none" stroke-width="1.1" />
<path d="M962.5 74.5H958.5V86.5H962.5M969.5 74.5H973.5V86.5H969.5" stroke="#2b2b2b" fill="none" stroke-width="1.2" />
<path d="M959 78.5H962M959 82.5H962M970 78.5H973M970 82.5H973" stroke="#b4b4b4" fill="none" stroke-width="1" />
<rect x="963.5" y="71" width="4.5" height="8" stroke="#1c70c4" fill="#9ccbee" stroke-width="1.2" />
<path d="M966 87V81.5M963.5 83.8L966 81.3L968.5 83.8" stroke="#e8383d" fill="none" stroke-width="1.1" />
<rect x="910.5" y="103.5" width="15" height="15" stroke="#2b2b2b" fill="#fff" stroke-width="1.2" />
<path d="M915.5 116V118M920.5 116V118" stroke="#b4b4b4" fill="none" stroke-width="1" />
<rect x="910.5" y="111.5" width="15" height="4" stroke="#1c70c4" fill="#9ccbee" stroke-width="1.2" />
<path d="M918.5 110V105.5M916 108L918.5 105.5L921 108" stroke="#2a8ad4" fill="none" stroke-width="1.1" />
<rect x="934.5" y="103.5" width="15" height="15" stroke="#2b2b2b" fill="#fff" stroke-width="1.2" />
<path d="M939.5 104V106M944.5 104V106" stroke="#b4b4b4" fill="none" stroke-width="1" />
<rect x="934.5" y="106.5" width="15" height="4" stroke="#1c70c4" fill="#9ccbee" stroke-width="1.2" />
<path d="M942.5 112V117M940 114.5L942.5 117L945 114.5" stroke="#2a8ad4" fill="none" stroke-width="1.1" />
<path d="M958.5 103.5H970.5M958.5 118.5H970.5M958.5 103.5V107M958.5 114V118.5M970.5 103.5V107M970.5 114V118.5" stroke="#2b2b2b" fill="none" stroke-width="1.2" />
<path d="M962.5 104V108M966.5 104V108M962.5 113V118M966.5 113V118" stroke="#b4b4b4" fill="none" stroke-width="1" />
<rect x="965.5" y="108.5" width="8.5" height="4" stroke="#1c70c4" fill="#9ccbee" stroke-width="1.2" />
<path d="M958.5 110.5H964M961.5 108L964 110.5L961.5 113" stroke="#e8383d" fill="none" stroke-width="1.1" />
<rect x="999.5" y="71.5" width="15" height="15" stroke="#2b2b2b" fill="#fff" stroke-width="1.3" />
<path d="M1004.5 72V76M1009.5 72V76M1000 76.5H1004M1000 81.5H1004" stroke="#b4b4b4" fill="none" stroke-width="1" />
<rect x="1004.5" y="76.5" width="10" height="10" fill="#9ccbee"/>
<path d="M1004.5 86.5V76.5H1014.5" stroke="#1c70c4" fill="none" stroke-width="1.3" />
<rect x="1023.5" y="71.5" width="15" height="15" stroke="#2b2b2b" fill="#fff" stroke-width="1.3" />
<path d="M1028.5 72V76M1033.5 72V76M1024 76.5H1028M1024 81.5H1028" stroke="#b4b4b4" fill="none" stroke-width="1" />
<rect x="1028.5" y="76.5" width="10" height="10" fill="#9ccbee"/>
<path d="M1028.5 86.5V76.5H1038.5M1033.5 76.5V86.5M1028.5 81.5H1038.5" stroke="#1c70c4" fill="none" stroke-width="1.3" />
<path d="M1051 71.5H1047.5V86.5H1051M1059 71.5H1062.5V86.5H1059" stroke="#2b2b2b" fill="none" stroke-width="1.3" />
<path d="M1048 75.5H1051M1048 83.5H1051M1059 75.5H1062M1059 83.5H1062" stroke="#b4b4b4" fill="none" stroke-width="1" />
<path d="M1049.5 78.5H1060.5M1052 76L1049.5 78.5L1052 81M1058 76L1060.5 78.5L1058 81" stroke="#2a8ad4" fill="none" stroke-width="1.1" />
<rect x="1000" y="114" width="14" height="2.5" fill="#fff"/>
<path d="M999.5 109.5L1004.5 104.5L1010 110L1005 114Z" stroke="#333" fill="#c4c4c4" stroke-width="1.2" />
<path d="M1004 103V108.5" stroke="#333" fill="none" stroke-width="1.2" />
<path d="M1008.5 107.5Q1011 107.5 1011 111V114" stroke="#1c70c4" fill="none" stroke-width="1.8" />
<path d="M1023.5 109L1027 112.5L1030.5 109" stroke="#7a7a7a" fill="none" stroke-width="1.3" />
<rect x="1039.5" y="103.5" width="14.5" height="14.5" stroke="#2b2b2b" fill="#fff" stroke-width="1.3" />
<path d="M1046.5 105V117M1041 110.5H1053" stroke="#444" fill="none" stroke-width="1" stroke-dasharray="1 1.5"/>
<path d="M1063.5 109L1067 112.5L1070.5 109" stroke="#7a7a7a" fill="none" stroke-width="1.3" />
<path d="M1106.5 65.5H1121L1128.5 72.5V94H1106.5Z" stroke="#2b2b2b" fill="#fff" stroke-width="1.3" />
<path d="M1121 65.5V72.5H1128.5" stroke="#2b2b2b" fill="none" stroke-width="1.2" />
<rect x="1099.5" y="76.5" width="16" height="14" stroke="#2b2b2b" fill="#fff" stroke-width="1.3" />
<path d="M1102 79.5H1113" stroke="#555" fill="none" stroke-width="1" />
<path d="M1102 81.5H1113" stroke="#555" fill="none" stroke-width="1" />
<path d="M1102 83.5H1113" stroke="#555" fill="none" stroke-width="1" />
<path d="M1102 85.5H1113" stroke="#555" fill="none" stroke-width="1" />
<path d="M1102 87.5H1113" stroke="#555" fill="none" stroke-width="1" />
<path d="M1162.5 65.5H1177L1184.5 72.5V94H1162.5Z" stroke="#2b2b2b" fill="#fff" stroke-width="1.3" />
<path d="M1177 65.5V72.5H1184.5" stroke="#2b2b2b" fill="none" stroke-width="1.2" />
<rect x="1155.5" y="76.5" width="16" height="14" stroke="#2b2b2b" fill="#fff" stroke-width="1.3" />
<path d="M1158 79.5H1169" stroke="#555" fill="none" stroke-width="1" />
<path d="M1158 81.5H1169" stroke="#555" fill="none" stroke-width="1" />
<path d="M1158 83.5H1169" stroke="#555" fill="none" stroke-width="1" />
<path d="M1158 85.5H1169" stroke="#555" fill="none" stroke-width="1" />
<path d="M1158 87.5H1169" stroke="#555" fill="none" stroke-width="1" />
<circle cx="1225.5" cy="79.5" r="14" fill="none" stroke="#5c1a8c" stroke-width="1.3"/>
<ellipse cx="1225.5" cy="79.5" rx="7" ry="14" fill="none" stroke="#5c1a8c" stroke-width="1.2"/>
<path d="M1225.5 65.5V93.5M1211.5 79.5H1239.5M1214.5 70.5Q1225.5 75 1236.5 70.5M1214.5 88.5Q1225.5 84 1236.5 88.5" stroke="#5c1a8c" fill="none" stroke-width="1.2" />
<path d="M1267.5 65.5H1279.5L1285.5 71.5V88.5H1267.5Z" stroke="#2b2b2b" fill="#fff" stroke-width="1.3" />
<path d="M1279.5 65.5V71.5H1285.5" stroke="#2b2b2b" fill="none" stroke-width="1.1" />
<path d="M1273.5 76.5H1290.5L1296.5 82.5V94H1273.5Z" stroke="#2b2b2b" fill="#fff" stroke-width="1.3" />
<path d="M1290.5 76.5V82.5H1296.5" stroke="#2b2b2b" fill="none" stroke-width="1.1" />
<path d="M1276 84.5H1294" stroke="#b0b0b0" fill="none" stroke-width="1" />
<path d="M1276 87.5H1294" stroke="#b0b0b0" fill="none" stroke-width="1" />
<path d="M1276 90.5H1294" stroke="#b0b0b0" fill="none" stroke-width="1" />
<path d="M1286 66.5H1293V73M1290 70.3L1293 73.3L1296 70.3" stroke="#2a8ad4" fill="none" stroke-width="1.2" />
<path d="M1309 64.5H1323M1309 76.5H1323" stroke="#2b2b2b" fill="none" stroke-width="1.1" />
<path d="M1314 66.5H1323M1314 68.5H1323M1314 70.5H1323M1314 72.5H1323M1314 74.5H1323" stroke="#2b2b2b" fill="none" stroke-width="1" />
<path d="M1307.5 70.5H1313M1310.5 68L1313 70.5L1310.5 73" stroke="#2a8ad4" fill="none" stroke-width="1.1" />
<path d="M1313 89.5H1322M1313 95.5H1322M1313 101.5H1322" stroke="#2b2b2b" fill="none" stroke-width="1.1" />
<text x="1309.5" y="91.2" font-size="6" font-weight="bold" fill="#1c78d0" text-anchor="middle" font-family="Liberation Sans,sans-serif">1</text>
<text x="1309.5" y="97.0" font-size="6" font-weight="bold" fill="#1c78d0" text-anchor="middle" font-family="Liberation Sans,sans-serif">2</text>
<text x="1309.5" y="103.0" font-size="6" font-weight="bold" fill="#1c78d0" text-anchor="middle" font-family="Liberation Sans,sans-serif">3</text>
<text x="1311.3" y="122.5" font-size="16" fill="#e8383d" stroke="#e8383d" stroke-width=".5" text-anchor="middle" font-family="DejaVu Sans Light,DejaVu Sans,sans-serif" font-weight="200" textLength="8.6" lengthAdjust="spacingAndGlyphs">A</text>
<text x="1317.5" y="126.6" font-size="17.8" fill="#2a8ad4" stroke="#2a8ad4" stroke-width=".5" text-anchor="middle" font-family="DejaVu Sans Light,DejaVu Sans,sans-serif" font-weight="200" textLength="11" lengthAdjust="spacingAndGlyphs">A</text>
<path d="M1393.5 72H1392.5A3.5 3.5 0 0 0 1392.5 79H1393.5Z" stroke="#555" fill="#c8c8c8" stroke-width="1" />
<path d="M1393.5 72V87M1398.5 72V87M1390 72H1401.5" stroke="#444" fill="none" stroke-width="1.2" />
<rect x="1387.5" y="103.5" width="15" height="15" stroke="#222" fill="#fff" stroke-width="1.3" />
<path d="M1392.5 104V118M1397.5 104V118M1388 108.5H1402M1388 113.5H1402" stroke="#222" fill="none" stroke-width="1.1" />
<path d="M164.5 146V140.5H170" stroke="#787878" fill="none" stroke-width="1" />
<path d="M171 142.6V147H166.6Z" fill="#7a7a7a"/>
<path d="M167 143L170 146" stroke="#7a7a7a" fill="none" stroke-width="1.1" />
<path d="M775.5 146V140.5H781" stroke="#787878" fill="none" stroke-width="1" />
<path d="M782 142.6V147H777.6Z" fill="#7a7a7a"/>
<path d="M778 143L781 146" stroke="#7a7a7a" fill="none" stroke-width="1.1" />
<path d="M1071.5 146V140.5H1077" stroke="#787878" fill="none" stroke-width="1" />
<path d="M1078 142.6V147H1073.6Z" fill="#7a7a7a"/>
<path d="M1074 143L1077 146" stroke="#7a7a7a" fill="none" stroke-width="1.1" />
<path d="M1244.5 146V140.5H1250" stroke="#787878" fill="none" stroke-width="1" />
<path d="M1251 142.6V147H1246.6Z" fill="#7a7a7a"/>
<path d="M1247 143L1250 146" stroke="#7a7a7a" fill="none" stroke-width="1.1" />
<path d="M1488.5 146V140.5H1494" stroke="#787878" fill="none" stroke-width="1" />
<path d="M1495 142.6V147H1490.6Z" fill="#7a7a7a"/>
<path d="M1491 143L1494 146" stroke="#7a7a7a" fill="none" stroke-width="1.1" />
<rect x="1368.5" y="814.5" width="7" height="7" fill="none" stroke="#3a3a3a" stroke-width="1.2" rx="1"/>
<path d="M1370.5 817H1373.5M1370.5 819H1373.5" stroke="#3a3a3a" fill="none" stroke-width="1" />
<path d="M1364 818L1367 815.5V820.5ZM1380 818L1377 815.5V820.5ZM1372 810L1369.5 813H1374.5ZM1372 826L1369.5 823H1374.5Z" fill="#3a3a3a"/>
<rect x="1386.5" y="812.5" width="7" height="11" fill="none" stroke="#3a3a3a" stroke-width="1.2" rx="1"/>
<path d="M1388.5 815.5H1391.5M1388.5 817.5H1391.5M1388.5 819.5H1391.5M1388.5 821.5H1391.5" stroke="#3a3a3a" fill="none" stroke-width="1" />
<path d="M1382 818L1385 815.5V820.5ZM1398 818L1395 815.5V820.5Z" fill="#3a3a3a"/>
<rect x="1404" y="817" width="8" height="2" fill="#3a3a3a"/>
<rect x="1423" y="818" width="91" height="1" fill="#3a3a3a"/>
<rect x="1466" y="814" width="4" height="9" fill="#3a3a3a"/>
<rect x="1525" y="817" width="8" height="2" fill="#3a3a3a"/><rect x="1528" y="814" width="2" height="8" fill="#3a3a3a"/></svg></body></html>
